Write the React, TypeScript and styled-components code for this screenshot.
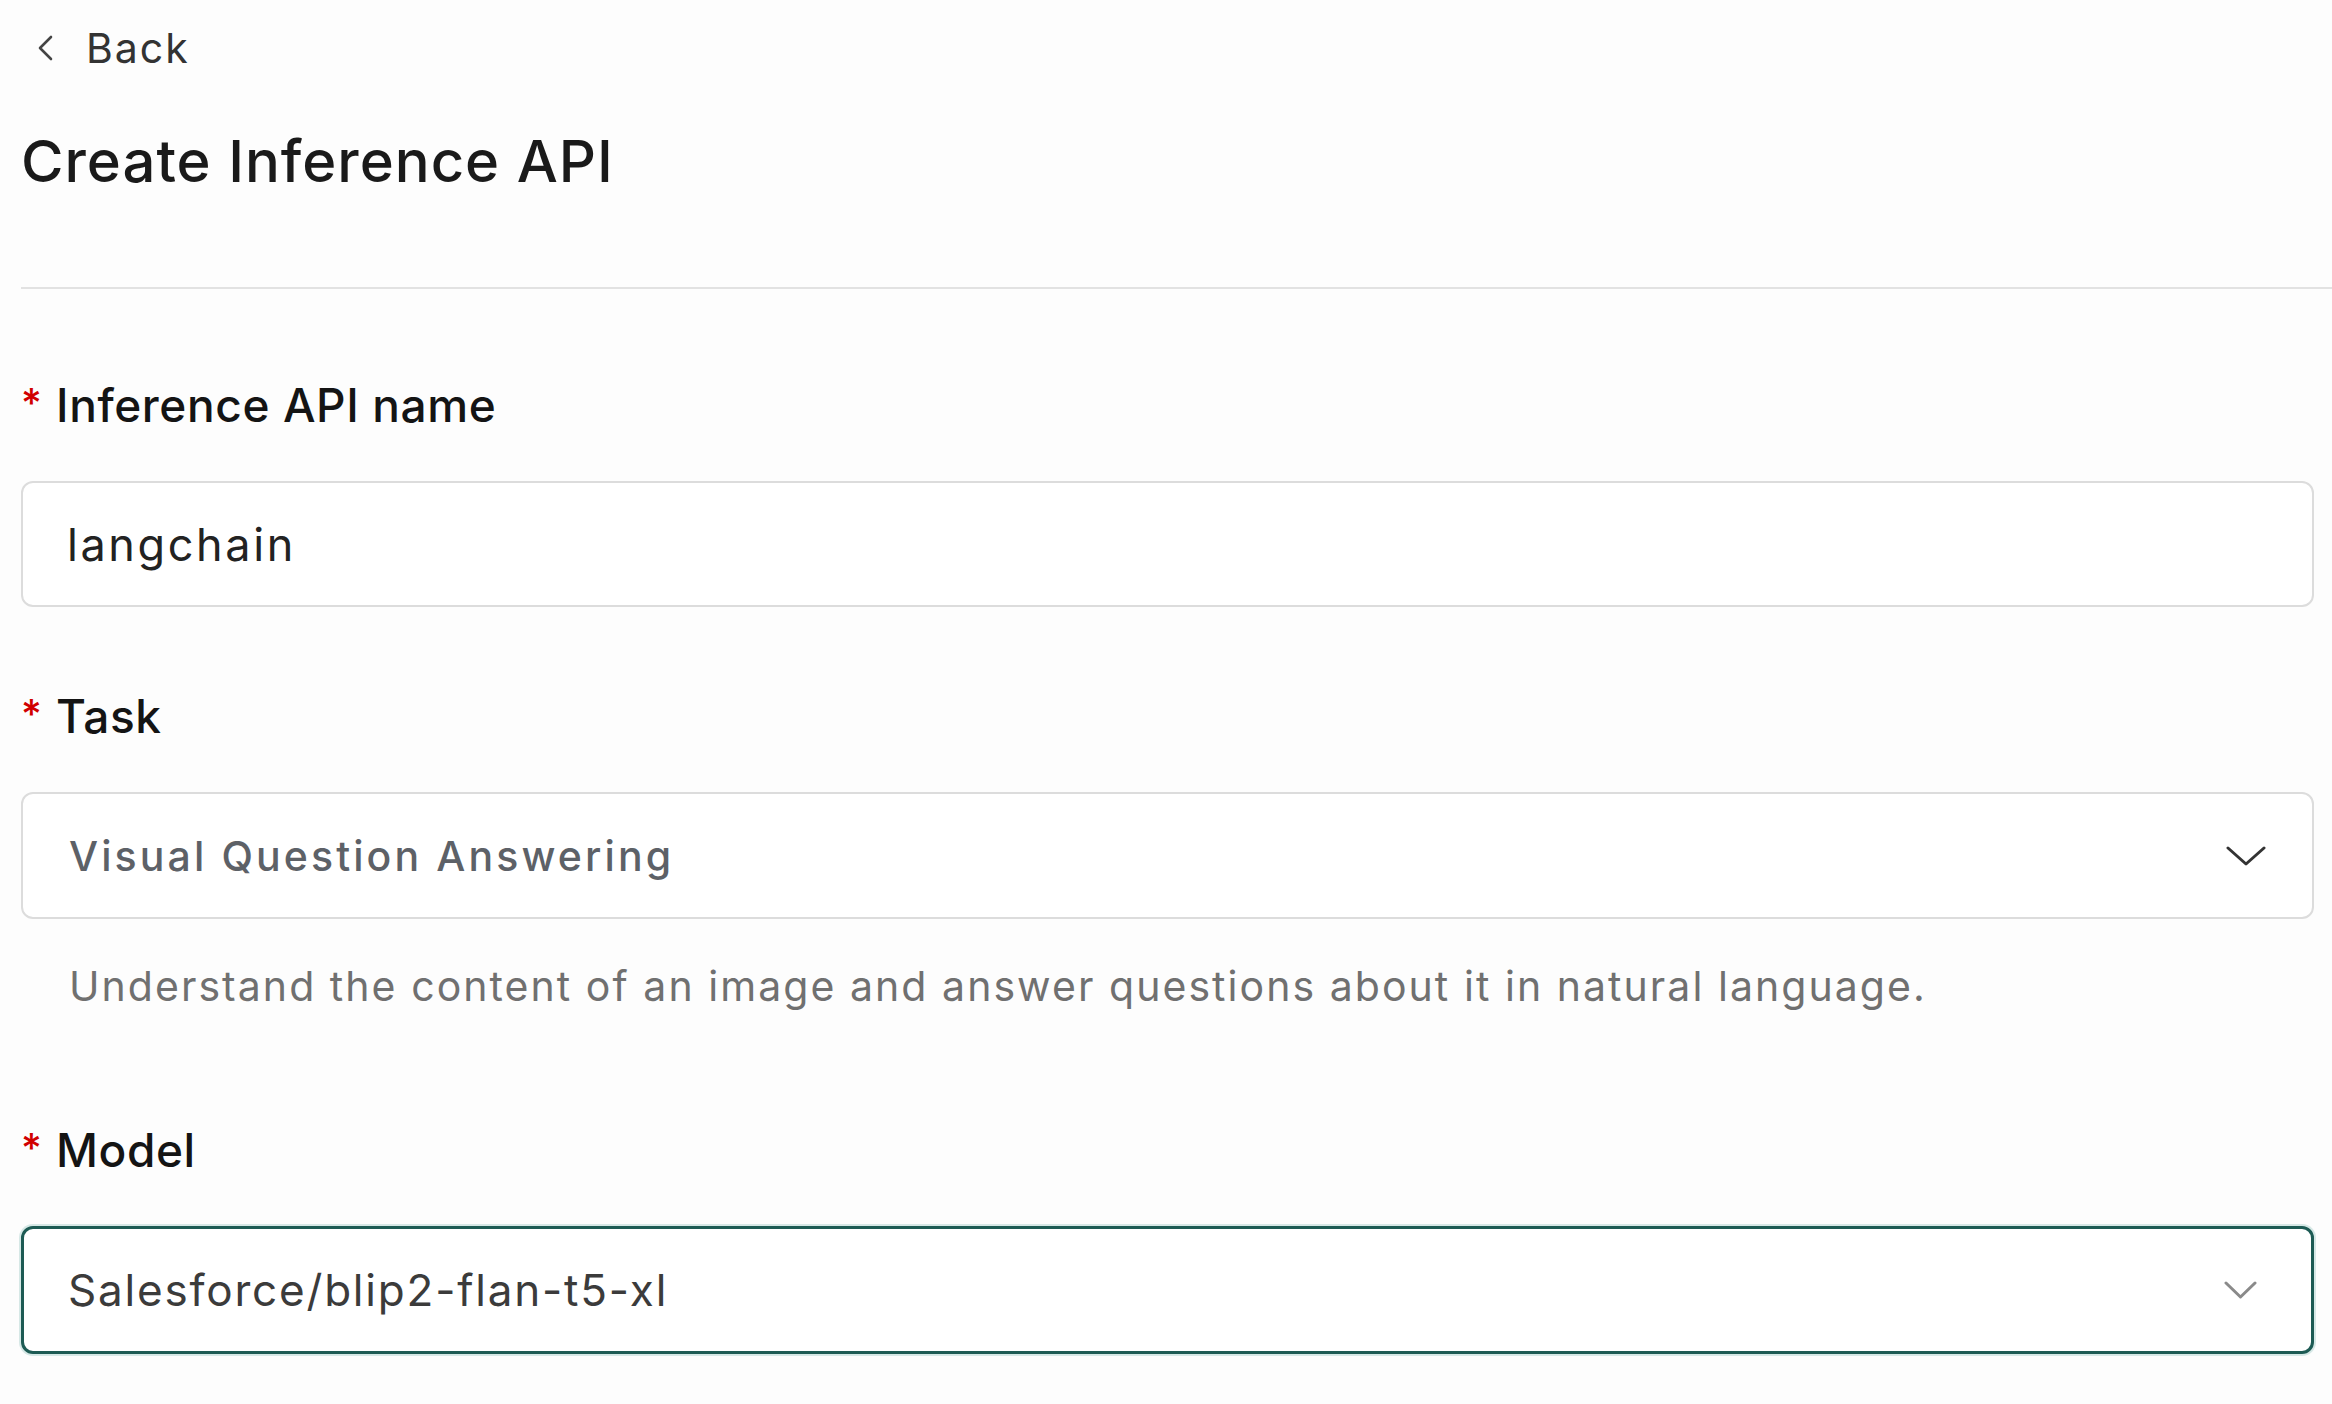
import React from 'react';
import styled, { createGlobalStyle } from 'styled-components';

const GlobalStyle = createGlobalStyle`
  html, body {
    margin: 0;
    padding: 0;
    background: #fdfdfd;
  }
  body {
    font-family: Inter, "Noto Sans", sans-serif;
  }
`;

const Page = styled.main`
  display: flex;
  flex-direction: column;
  padding: 0 18px 60px 21px;
  overflow: hidden;
`;

const BackLink = styled.a`
  display: flex;
  align-items: center;
  gap: 33px;
  height: 96px;
  padding-left: 16px;
  color: #333;
  font-size: 41px;
  letter-spacing: 2px;
  text-decoration: none;
  cursor: pointer;
`;

const Title = styled.h1`
  margin: 30px 0 0;
  font-size: 58px;
  line-height: 70px;
  font-weight: 500;
  color: #1a1a1a;
  letter-spacing: 1px;
`;

const Divider = styled.hr`
  margin: 91px -18px 0 0;
  border: none;
  height: 2px;
  background: #e2e2e2;
`;

const Field = styled.section<{ $top: number }>`
  display: flex;
  flex-direction: column;
  margin-top: ${(p) => p.$top}px;
`;

const Label = styled.label`
  display: flex;
  align-items: center;
  height: 56px;
  font-size: 46px;
  font-weight: 500;
  color: #141414;
  letter-spacing: 0.6px;
`;

const Required = styled.span`
  align-self: flex-start;
  margin-top: 6px;
  width: 35px;
  font-size: 40px;
  line-height: 40px;
  color: #d10000;
`;

const TextBox = styled.div`
  display: flex;
  align-items: center;
  box-sizing: border-box;
  height: 126px;
  margin-top: 48px;
  padding-left: 44px;
  border: 2px solid #dcdcdc;
  border-radius: 12px;
  background: #fff;
  font-size: 45px;
  color: #222;
  letter-spacing: 2.6px;
`;

const SelectBox = styled.div<{ $active?: boolean }>`
  display: flex;
  align-items: center;
  justify-content: space-between;
  box-sizing: border-box;
  height: ${(p) => (p.$active ? 128 : 127)}px;
  margin-top: 48px;
  padding: 0 ${(p) => (p.$active ? 54 : 46)}px 0 ${(p) => (p.$active ? 44 : 46)}px;
  border: ${(p) => (p.$active ? '3px solid #1d5b54' : '2px solid #dcdcdc')};
  border-radius: 12px;
  background: #fff;
  box-shadow: ${(p) => (p.$active ? '0 0 0 2px rgba(40, 140, 125, 0.18)' : 'none')};
`;

const SelectValue = styled.span<{ $muted?: boolean }>`
  font-size: ${(p) => (p.$muted ? 41 : 44)}px;
  font-weight: ${(p) => (p.$muted ? 500 : 400)};
  color: ${(p) => (p.$muted ? '#5d6167' : '#3b3b3b')};
  letter-spacing: ${(p) => (p.$muted ? 3.1 : 1.8)}px;
`;

const Hint = styled.p`
  margin: 39px 0 0;
  padding-left: 48px;
  font-size: 41px;
  line-height: 56px;
  color: #707070;
  letter-spacing: 2.05px;
`;

const Chevron: React.FC<{ w: number; h: number; color: string }> = ({ w, h, color }) => (
  <svg width={w} height={h} viewBox={`0 0 ${w} ${h}`} fill="none">
    <polyline
      points={`2,2 ${w / 2},${h - 2} ${w - 2},2`}
      stroke={color}
      strokeWidth="3"
      strokeLinecap="round"
      strokeLinejoin="round"
    />
  </svg>
);

const BackArrow = () => (
  <svg width="16" height="26" viewBox="0 0 16 26" fill="none">
    <polyline points="14,2 3,13 14,24" stroke="#444" strokeWidth="2.6" strokeLinecap="round" strokeLinejoin="round" />
  </svg>
);

export default function App() {
  return (
    <>
      <GlobalStyle />
      <Page>
        <BackLink>
          <BackArrow />
          Back
        </BackLink>
        <Title>Create Inference API</Title>
        <Divider />

        <Field $top={88}>
          <Label>
            <Required>*</Required>
            Inference API name
          </Label>
          <TextBox>langchain</TextBox>
        </Field>

        <Field $top={81}>
          <Label>
            <Required>*</Required>
            Task
          </Label>
          <SelectBox>
            <SelectValue $muted>Visual Question Answering</SelectValue>
            <Chevron w={40} h={20} color="#333" />
          </SelectBox>
          <Hint>Understand the content of an image and answer questions about it in natural language.</Hint>
        </Field>

        <Field $top={108}>
          <Label>
            <Required>*</Required>
            Model
          </Label>
          <SelectBox $active>
            <SelectValue>Salesforce/blip2-flan-t5-xl</SelectValue>
            <Chevron w={33} h={18} color="#8a8a8a" />
          </SelectBox>
        </Field>
      </Page>
    </>
  );
}
